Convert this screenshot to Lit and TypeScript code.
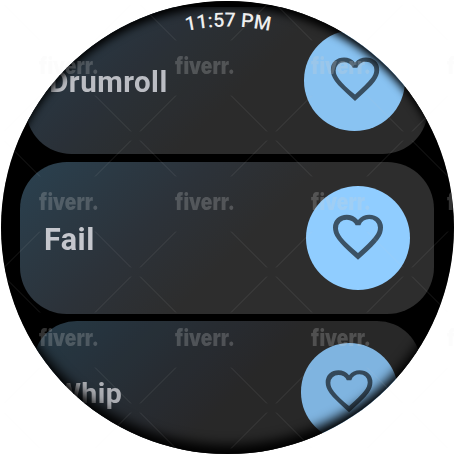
import { LitElement, html, svg, css } from "lit";
import { customElement, property } from "lit/decorators.js";

@customElement("sound-card")
class SoundCard extends LitElement {
  @property() label = "";
  static styles = css`
    :host {
      display: flex;
      flex: none;
      align-items: center;
      justify-content: space-between;
      box-sizing: border-box;
      width: calc(414px * var(--s));
      height: calc(152px * var(--s));
      padding: 0 calc(24px * var(--s));
      border-radius: calc(47px * var(--s));
      background: linear-gradient(135deg, #2a4150 0%, #2c3239 34%, #2d2d2d 54%);
      filter: brightness(var(--dim));
    }
    .label {
      font: 700 calc(30.5px * var(--s)) / 1.2 Roboto, sans-serif;
      letter-spacing: calc(0.5px * var(--s));
      color: #c5c7cd;
      padding-top: calc(4px * var(--s));
    }
    .fav {
      display: flex;
      align-items: center;
      justify-content: center;
      width: calc(104px * var(--s));
      height: calc(104px * var(--s));
      border-radius: 50%;
      background: #90cdff;
    }
    svg {
      width: calc(60px * var(--s));
      height: calc(60px * var(--s));
      fill: #3b5265;
    }
  `;
  render() {
    return html`<span class="label">${this.label}</span>
      <div class="fav">
        <svg viewBox="0 -947 960 960">
          <path d="m480-120-58-52q-101-91-167-157T150-447.5Q111-500 95.5-544T80-634q0-94 63-150t157-56q52 0 99 22t81 62q34-40 81-62t99-22q94 0 157 56t63 150q0 46-15.5 90T810-447.5Q771-395 705-329T538-172l-58 52Zm0-108q96-86 158-147.5t98-107q36-45.500 50-81t14-70.500q0-60-40-98t-100-38q-47 0-87 24.500T518-670h-76q-15-41-55-65.500T300-760q-60 0-100 38t-40 98q0 35 14 70.500t50 81q36 45.500 98 107T480-228Z"/>
        </svg>
      </div>`;
  }
}

@customElement("app-root")
class AppRoot extends LitElement {
  static styles = css`
    :host {
      display: block;
      position: relative;
      width: 454px;
      height: 454px;
      overflow: hidden;
      background: #fff;
    }
    .face {
      box-sizing: border-box;
      position: relative;
      margin: 1px 0 0 1px;
      width: 453px;
      height: 453px;
      border-radius: 50%;
      overflow: hidden;
      background: #000;
    }
    .list {
      display: flex;
      flex-direction: column;
      align-items: center;
      gap: 7px;
      padding: 6px 1px 0 0;
    }
    .first { --s: 0.967; --dim: 0.95; width: 402px; }
    .middle { --s: 1; --dim: 1; margin-top: 1px; }
    .last { --s: 0.935; --dim: 0.88; }
    .shade {
      position: absolute;
      inset: 0;
      border-radius: 50%;
      box-shadow: inset 0 9px 8px -3px #000, inset 0 -13px 12px -4px #000;
    }
    .over {
      position: absolute;
      inset: 0;
      width: 454px;
      height: 454px;
    }
    .time {
      font: 500 19.6px Roboto, sans-serif;
      fill: #eee;
    }
    .mark {
      font: 900 22.5px Inter, sans-serif;
      fill: #d0d0d0;
      fill-opacity: 0.24;
    }
    .line {
      stroke: #d0d0d0;
      stroke-opacity: 0.2;
      stroke-width: 0.65;
      fill: none;
    }
  `;

  marks() {
    const k = [0, 1, 2, 3];
    return k.map((r) =>
      k.map((c) => {
        const x = c * 136 - 1;
        const y = r * 136 - 0.5;
        return svg`
          ${r < 3
            ? svg`<text class="mark" x=${x + 40} y=${y + 74.5} textLength="60" lengthAdjust="spacingAndGlyphs">fiverr.</text>`
            : ""}
          <path class="line" d="M${x - 40} ${y - 40}l36 36M${x + 41} ${y - 40}l-36 36M${x - 4} ${y + 5}l-36 36M${x + 5} ${y + 5}l36 36"/>`;
      })
    );
  }

  render() {
    return html`
      <div class="face">
        <div class="list">
          <sound-card class="first" label="Drumroll"></sound-card>
          <sound-card class="middle" label="Fail"></sound-card>
          <sound-card class="last" label="Whip"></sound-card>
        </div>
        <div class="shade"></div>
      </div>
      <svg class="over" viewBox="0 0 454 454">
        <defs>
          <path id="arc" d="M28 226.500a200 200 0 0 1 400 0"/>
          <mask id="disc" maskUnits="userSpaceOnUse" x="0" y="0" width="454" height="454">
            <rect width="454" height="454" fill="#444"/>
            <circle cx="227.500" cy="227.500" r="226.500" fill="#fff"/>
          </mask>
        </defs>
        <text class="time" text-anchor="middle"><textPath href="#arc" startOffset="50%">11:57 PM</textPath></text>
        <g mask="url(#disc)">${this.marks()}</g>
      </svg>
    `;
  }
}
